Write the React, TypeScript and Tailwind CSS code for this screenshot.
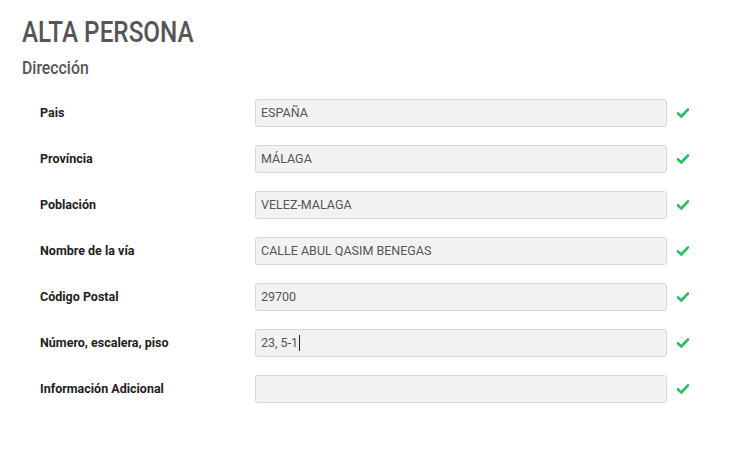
const rows = [
  { label: "Pais", value: "ESPAÑA" },
  { label: "Província", value: "MÁLAGA" },
  { label: "Población", value: "VELEZ-MALAGA" },
  { label: "Nombre de la vía", value: "CALLE ABUL QASIM BENEGAS" },
  { label: "Código Postal", value: "29700" },
  { label: "Número, escalera, piso", value: "23, 5-1", caret: true },
  { label: "Información Adicional", value: "" },
];

const Check = () => (
  <svg width="12" height="10" viewBox="0 0 12 10" className="shrink-0">
    <path d="M1 5.5 L4.3 8.5 L11 1.5" fill="none" stroke="#21c25e" strokeWidth="2.6" strokeLinecap="square" />
  </svg>
);

export default function App() {
  return (
    <div className="min-h-[466px] w-[750px] bg-white font-['Roboto',sans-serif] px-[22px] pt-[13px]">
      <h1 className="text-[30px] leading-[38px] font-medium text-[#555555]">
        <span className="inline-block origin-left scale-x-[0.81]">ALTA PERSONA</span>
      </h1>
      <h2 className="mt-[6px] text-[18px] leading-[22px] font-medium text-[#555555]">
        <span className="inline-block origin-left scale-x-[0.88]">Dirección</span>
      </h2>
      <div className="mt-[20px] flex flex-col gap-[18px]">
        {rows.map((r) => (
          <div key={r.label} className="flex items-center h-[28px]">
            <div className="w-[233px] pl-[18px] text-[12.5px] font-bold text-[#222222] whitespace-nowrap">
              {r.label}
            </div>
            <div className="w-[412px] h-[28px] rounded-[3px] border border-[#d6d6d6] bg-[#f2f2f2] px-[5px] flex items-center text-[12.5px] text-[#555555]">
              {r.value}
              {r.caret && <span className="ml-[1px] inline-block w-px h-[16px] bg-[#222]" />}
            </div>
            <div className="ml-[10px]">
              <Check />
            </div>
          </div>
        ))}
      </div>
    </div>
  );
}
